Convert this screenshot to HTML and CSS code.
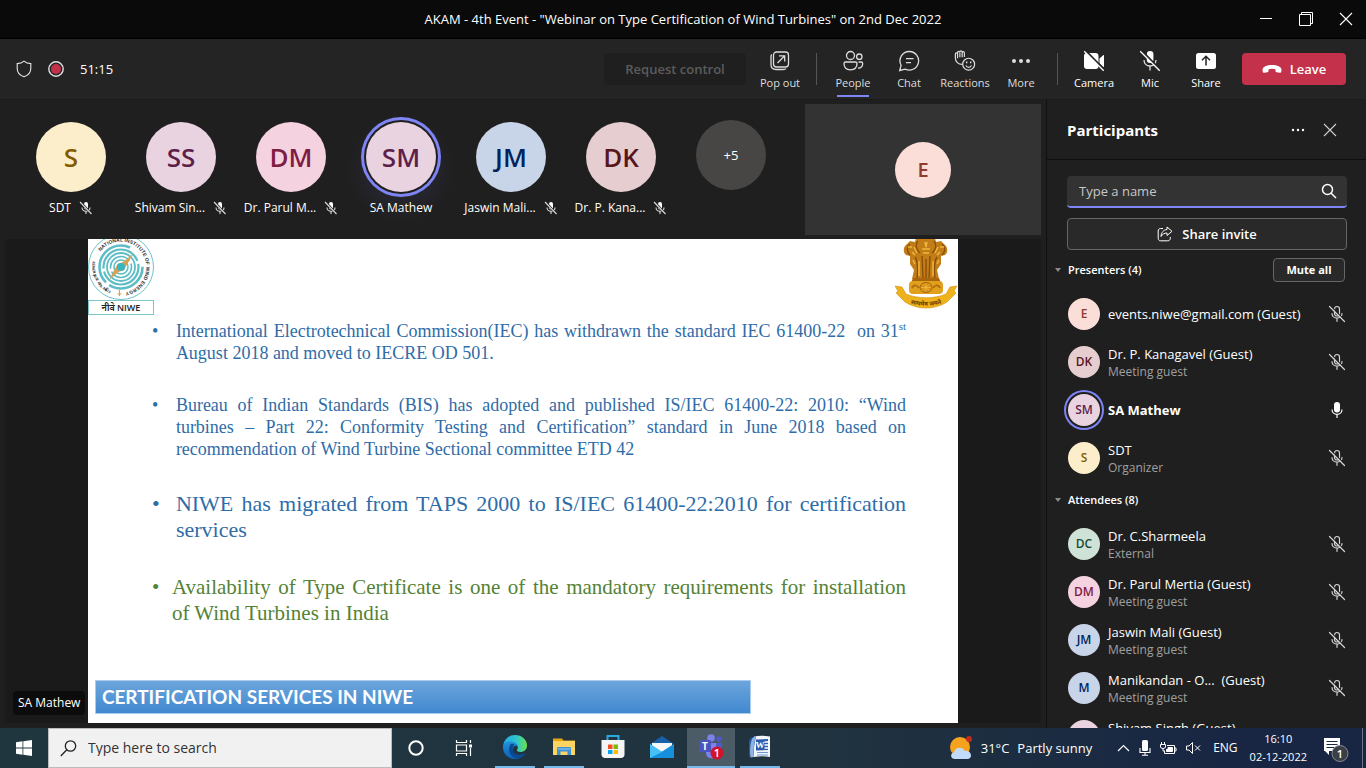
FILE: index.html
```html
<!DOCTYPE html>
<html lang="en">
<head>
<meta charset="utf-8">
<title>AKAM - 4th Event</title>
<link rel="stylesheet" href="styles.css">
</head>
<body>
<svg class="sprite" aria-hidden="true">
  <symbol id="mic-off-small" viewBox="0 0 14 14">
    <rect x="5" y="1" width="4" height="7.5" rx="2" fill="#fff"/>
    <path d="M3 6.5c0 5 8 5 8 0M7 10.5V13" fill="none" stroke="#ddd" stroke-width="1.1"/>
    <path d="M1.5 1l11 12" stroke="#1f1f1f" stroke-width="2.4"/>
    <path d="M1 1l11.5 12" stroke="#ddd" stroke-width="1.1"/>
  </symbol>
  <symbol id="mic-off" viewBox="0 0 18 18">
    <g fill="none" stroke="#d6d6d6" stroke-width="1.2" stroke-linecap="round">
      <rect x="6.5" y="1.5" width="5" height="9.5" rx="2.5"/>
      <path d="M4 8.5c0 6 10 6 10 0M9 13.2V16.3"/>
      <path d="M2.800 1.200l14 14" stroke="#1f1f1f" stroke-width="1.200"/>
      <path d="M1.5 1.5l15 15"/>
    </g>
  </symbol>
  <symbol id="mic-on" viewBox="0 0 18 18">
    <rect x="6" y="1" width="6" height="10.5" rx="3" fill="#fff"/>
    <path d="M4 8.5c0 6.5 10 6.5 10 0M9 13.5V17" fill="none" stroke="#fff" stroke-width="1.2"/>
  </symbol>
</svg>

<header class="titlebar">
  <h1 class="titlebar-text">AKAM - 4th Event - "Webinar on Type Certification of Wind Turbines" on 2nd Dec 2022</h1>
  <div class="window-controls">
    <button class="window-button" aria-label="Minimize"><svg width="14" height="14" viewBox="0 0 14 14"><path d="M1 6.5h12" stroke="#fff"/></svg></button>
    <button class="window-button" aria-label="Restore"><svg width="14" height="14" viewBox="0 0 14 14" fill="none" stroke="#fff"><path d="M.5 2.5h11v11H.5zM2.500 2V.5h11v11H12"/></svg></button>
    <button class="window-button" aria-label="Close"><svg width="14" height="14" viewBox="0 0 14 14"><path d="M1 1l12 12M13 1L1 13" stroke="#fff" stroke-width="1.1"/></svg></button>
  </div>
</header>

<nav class="toolbar">
  <div class="call-status">
    <svg width="16" height="18" viewBox="0 0 16 18" fill="none" stroke="#e6e6e6" stroke-width="1.1"><path d="M8 1.200C6.200 2.800 3.800 3.600 1.200 3.600V8.500C1.200 12.500 3.500 15.300 8 16.800C12.500 15.300 14.800 12.500 14.800 8.500V3.600C12.200 3.600 9.800 2.800 8 1.200z"/></svg>
    <svg width="16" height="16" viewBox="0 0 16 16"><circle cx="8" cy="8" r="7.200" fill="none" stroke="#e1e1e1" stroke-width="1.400"/><circle cx="8" cy="8" r="5" fill="#c4314b"/></svg>
    <span class="timer">51:15</span>
  </div>
  <div class="tools">
    <button class="request" disabled>Request control</button>
    <button class="tool"><svg width="22" height="22" viewBox="0 0 22 22" fill="none" stroke="#ddd" stroke-width="1.300"><rect x="4.500" y="2" width="15" height="15" rx="3"/><path d="M2.700 4.500C2 5 2 6 2 7v7.500c0 3 2 5 5 5H14c1.500 0 2.500-.2 3-.8"/><path d="M8.500 13l7-7M10 5.800h5.700v5.700"/></svg><span>Pop out</span></button>
    <span class="divider"></span>
    <button class="tool tool-active"><svg width="22" height="22" viewBox="0 0 22 22" fill="none" stroke="#ddd" stroke-width="1.300"><circle cx="8.500" cy="5.500" r="4"/><circle cx="17.300" cy="6.700" r="2.700"/><path d="M3.500 12h9.800c1 0 1.700.7 1.700 1.600 0 4-2.500 6.200-6.600 6.200S2 17.500 2 13.600c0-.9.600-1.600 1.500-1.600z"/><path d="M16.500 12h2.700c.8 0 1.500.7 1.500 1.500 0 2.700-1.600 4.500-4.700 4.700"/></svg><span>People</span></button>
    <button class="tool"><svg width="22" height="22" viewBox="0 0 22 22" fill="none" stroke="#ddd" stroke-width="1.300"><path d="M11.500 1.500a9.300 9.300 0 1 1-4.400 17.600L1.700 20.500l1.400-5.300A9.300 9.300 0 0 1 11.500 1.500z"/><path d="M8 8.700h7.500M8 12.700h5"/></svg><span>Chat</span></button>
    <button class="tool"><svg width="24" height="24" viewBox="0 0 24 24" fill="none" stroke="#ddd" stroke-width="1.300"><path d="M9.500 15.700C4.500 16 1.500 12.500 1.500 9V4.500c0-1.700 2.400-1.700 2.400 0V2.800c0-1.700 2.500-1.700 2.500 0V2.300c0-1.700 2.500-1.700 2.500 0v.7c0-1.700 2.400-1.700 2.400 0v4.500M3.900 4v5M6.400 3v5M8.900 3v5"/><circle cx="16" cy="15.500" r="6.500"/><path d="M13 16.800c1 2.800 5 2.800 6 0"/><path d="M13.800 12.500v2M18.200 12.500v2" stroke-width="1.600"/></svg><span>Reactions</span></button>
    <button class="tool"><svg width="22" height="22" viewBox="0 0 22 22" fill="#ddd"><circle cx="4" cy="11" r="2"/><circle cx="11" cy="11" r="2"/><circle cx="18" cy="11" r="2"/></svg><span>More</span></button>
    <span class="divider"></span>
    <button class="tool tool-bright"><svg width="22" height="22" viewBox="0 0 22 22"><rect x="1" y="3" width="14.500" height="16" rx="3" fill="#fff"/><path d="M16.500 8.500l4-3.500c.3-.2.500 0 .5.300v11.400c0 .3-.2.500-.5.300l-4-3.500z" fill="#fff"/><path d="M2.500.5l19.500 20" stroke="#242424" stroke-width="2"/><path d="M1.200 1.200l19.500 19.500" stroke="#fff" stroke-width="1.300"/></svg><span>Camera</span></button>
    <button class="tool tool-bright"><svg width="22" height="22" viewBox="0 0 22 22"><rect x="7.800" y="1" width="6.600" height="12" rx="3.300" fill="#fff"/><path d="M5 10c0 8 12 8 12 0M11 16v4.500" fill="none" stroke="#ddd" stroke-width="1.300"/><path d="M2.500.5l19.500 20" stroke="#242424" stroke-width="2"/><path d="M1.200 1.200l19.500 19.500" stroke="#fff" stroke-width="1.300"/></svg><span>Mic</span></button>
    <button class="tool tool-bright"><svg width="22" height="22" viewBox="0 0 22 22"><rect x="1" y="3" width="20" height="16" rx="2.500" fill="#fff"/><path d="M11 15.500V6.500M7 10.300l4-4 4 4" fill="none" stroke="#242424" stroke-width="1.500"/></svg><span>Share</span></button>
    <button class="leave"><svg width="20" height="10" viewBox="0 0 20 10"><path d="M10 1C15 1 19.500 2.800 19.500 6c0 2.200-.8 3-2 2.800l-2.800-.6c-1-.2-1.300-.8-1.300-1.700V5.200C11.500 4.500 8.500 4.500 6.600 5.200v1.300c0 .9-.3 1.500-1.300 1.700l-2.800.6C1.300 9 .5 8.200.5 6 .5 2.800 5 1 10 1z" fill="#fff"/></svg>Leave</button>
  </div>
</nav>

<main class="meeting">
  <section class="stage">
    <div class="gallery">
      <ul class="people">
        <li class="person"><span class="avatar avatar-large gold">S</span><span class="person-name"><span>SDT</span><svg width="14" height="14"><use href="#mic-off-small"/></svg></span></li>
        <li class="person"><span class="avatar avatar-large plum">SS</span><span class="person-name"><span>Shivam Sin...</span><svg width="14" height="14"><use href="#mic-off-small"/></svg></span></li>
        <li class="person"><span class="avatar avatar-large pink">DM</span><span class="person-name"><span>Dr. Parul M...</span><svg width="14" height="14"><use href="#mic-off-small"/></svg></span></li>
        <li class="person glow"><span class="avatar avatar-large plum speaking-large">SM</span><span class="person-name"><span>SA Mathew</span></span></li>
        <li class="person"><span class="avatar avatar-large blue">JM</span><span class="person-name"><span>Jaswin Mali...</span><svg width="14" height="14"><use href="#mic-off-small"/></svg></span></li>
        <li class="person"><span class="avatar avatar-large rose">DK</span><span class="person-name"><span>Dr. P. Kana...</span><svg width="14" height="14"><use href="#mic-off-small"/></svg></span></li>
        <li class="person person-more"><button class="avatar avatar-large more">+5</button></li>
      </ul>
      <div class="self-tile"><span class="avatar avatar-medium peach">E</span></div>
    </div>

    <div class="share-area">
      <article class="slide">
        <div class="slide-logos">
          <svg width="67" height="76" viewBox="0 0 67 76" role="img" aria-label="NIWE">
            <circle cx="33" cy="28" r="32.500" fill="#fff" stroke="#6cc3cb"/>
            <g fill="none" stroke="#5dbdc7">
              <circle cx="33" cy="28" r="21.500" stroke-width="2.600" stroke-dasharray="46 4 60 24"/>
              <circle cx="33" cy="28" r="17.500" stroke-width="2.200" stroke-dasharray="50 3"/>
              <circle cx="33" cy="28" r="14" stroke-width="1.800"/>
              <circle cx="33" cy="28" r="10.500" stroke-width="1.600" stroke-dasharray="28 3"/>
              <circle cx="33" cy="28" r="7" stroke-width="1.500"/>
            </g>
            <path d="M45 15L36 31 30.500 33 21 41l8.500-16 5.500-2z" fill="#d3a356"/>
            <circle cx="33" cy="28" r="4" fill="#37b6c0"/>
            <path d="M31.500 51v6M29.500 55h4" stroke="#d3a356" stroke-width="1.200"/>
            <path id="ring-left" d="M23 51.500A25.500 25.500 0 0 1 12 13" fill="none"/>
            <path id="ring-right" d="M12.500 12.500A25.500 25.500 0 1 1 35 53.500" fill="none"/>
            <text class="ring-text ring-text-hindi"><textPath href="#ring-left">राष्ट्रीय पवन ऊर्जा संस्थान</textPath></text>
            <text class="ring-text"><textPath href="#ring-right">NATIONAL INSTITUTE OF WIND ENERGY</textPath></text>
            <rect x=".5" y="61.500" width="65" height="14" fill="#fff" stroke="#7cc5cb"/>
            <text x="33" y="72" text-anchor="middle" class="niwe-text">नीवे NIWE</text>
          </svg>
          <svg width="64" height="72" viewBox="0 0 64 72" role="img" aria-label="National emblem">
            <path d="M18 40l2-9-4-6V17l-4-1c-3-2-3-8 0-10l4-4 5 1 1-4h19l1 4 5-1 4 4c3 2 3 8 0 10l-4 1v8l-4 6 2 9z" fill="#c27d16"/>
            <path d="M16 5c-4 3-3 9 0 11M48 5c4 3 3 9 0 11M24 2c-3 4-2 9 2 12M40 2c3 4 2 9-2 12M21 18c3 4 3 12 2 22M43 18c-3 4-3 12-2 22M28 17l1 23M36 17l-1 23M32 20v20" fill="none" stroke="#8a4d0a" stroke-width="1.300"/>
            <path d="M20 8l3 6M44 8l-3 6M31 3l1 5 1-5M28 10h8M29 14h6M25 22v15M39 22v15M14 8h4M46 8h4M18 13l3 3M46 13l-3 3M19 21l2 4M45 21l-2 4" stroke="#edb63c" stroke-width="1.500" fill="none"/>
            <path d="M19 39h26l2 5H17z" fill="#a8650d"/>
            <rect x="15" y="42" width="34" height="13" rx="4" fill="#e0a01c"/>
            <ellipse cx="32" cy="48.500" rx="6" ry="5" fill="#d58f18" stroke="#a8650d"/>
            <path d="M32 44v9M27 48.500h10M28.500 45l7 7M35.500 45l-7 7" stroke="#f6c648" stroke-width=".6"/>
            <path d="M18 49c2-4 5-3 7 0M39 49c2-3 5-4 7 0" fill="none" stroke="#b06f10" stroke-width="2"/>
            <path d="M1 47l7 1 4 7c12 5 28 5 40 0l4-7 7-1-3 5 2 2-9 9c-13 8-29 8-42 0l-9-9 2-2z" fill="#eeb21c" stroke="#d18f10" stroke-width=".6"/>
            <path id="motto" d="M8 60c12 9 36 9 48 0" fill="none"/>
            <text class="motto-text"><textPath href="#motto" startOffset="50%" text-anchor="middle">सत्यमेव जयते</textPath></text>
          </svg>
        </div>
        <ul class="points">
          <li class="point"><span class="full-line">International Electrotechnical Commission(IEC) has withdrawn the standard IEC 61400-22 &nbsp;on 31<sup>st</sup></span> August 2018 and moved to IECRE OD 501.</li>
          <li class="point"><span class="full-line">Bureau of Indian Standards (BIS) has adopted and published IS/IEC 61400-22: 2010: “Wind</span> <span class="full-line">turbines – Part 22: Conformity Testing and Certification” standard in June 2018 based on</span> recommendation of Wind Turbine Sectional committee ETD 42</li>
          <li class="point point-large"><span class="full-line">NIWE has migrated from TAPS 2000 to IS/IEC 61400-22:2010 for certification</span> services</li>
          <li class="point point-large point-green"><span class="full-line">Availability of Type Certificate is one of the mandatory requirements for installation</span> of Wind Turbines in India</li>
        </ul>
        <h2 class="slide-banner">CERTIFICATION SERVICES IN NIWE</h2>
      </article>
      <span class="presenter-tag">SA Mathew</span>
    </div>
  </section>

  <aside class="panel">
    <header class="panel-header">
      <h2 class="panel-title">Participants</h2>
      <button class="icon-button" aria-label="More options"><svg width="16" height="16" viewBox="0 0 16 16" fill="#fff"><circle cx="3" cy="8" r="1.200"/><circle cx="8" cy="8" r="1.200"/><circle cx="13" cy="8" r="1.200"/></svg></button>
      <button class="icon-button" aria-label="Close panel"><svg width="16" height="16" viewBox="0 0 16 16"><path d="M2 2l12 12M14 2L2 14" stroke="#d0d0d0" stroke-width="1.100"/></svg></button>
    </header>
    <div class="panel-body">
      <label class="search">
        <input class="search-input" type="text" placeholder="Type a name" aria-label="Type a name">
        <svg width="16" height="16" viewBox="0 0 16 16" fill="none" stroke="#fff" stroke-width="1.500"><circle cx="6.500" cy="6.500" r="5"/><path d="M10.200 10.200L15 15"/></svg>
      </label>
      <button class="invite"><svg width="16" height="16" viewBox="0 0 16 16" fill="none" stroke="#fff" stroke-width="1"><path d="M6 2.500H3.500C2 2.500 1.200 3.500 1.200 5v7.300c0 1.500.8 2.500 2.300 2.500h7.300c1.500 0 2.500-1 2.500-2.500V11"/><path d="M10 1l5 4.300-5 4.200V7C7.500 7 5.500 8 4 10.500 4.200 6.500 6.500 3.800 10 3.500z"/></svg>Share invite</button>
      <section class="group">
        <header class="group-header"><svg class="caret" width="6" height="4" viewBox="0 0 6 4"><path d="M0 0h6L3 4z" fill="#8a8a8a"/></svg><h3 class="group-title">Presenters (4)</h3><button class="mute-all">Mute all</button></header>
        <ul class="roster">
          <li class="member"><span class="avatar avatar-small peach">E</span><span class="member-text"><span class="member-name">events.niwe@gmail.com (Guest)</span></span><svg width="18" height="18"><use href="#mic-off"/></svg></li>
          <li class="member"><span class="avatar avatar-small rose">DK</span><span class="member-text two-lines"><span class="member-name">Dr. P. Kanagavel (Guest)</span><span class="member-role">Meeting guest</span></span><svg width="18" height="18"><use href="#mic-off"/></svg></li>
          <li class="member"><span class="avatar avatar-small plum speaking-small">SM</span><span class="member-text"><strong class="member-name">SA Mathew</strong></span><svg width="18" height="18"><use href="#mic-on"/></svg></li>
          <li class="member"><span class="avatar avatar-small gold">S</span><span class="member-text two-lines"><span class="member-name">SDT</span><span class="member-role">Organizer</span></span><svg width="18" height="18"><use href="#mic-off"/></svg></li>
        </ul>
      </section>
      <section class="group">
        <header class="group-header"><svg class="caret" width="6" height="4" viewBox="0 0 6 4"><path d="M0 0h6L3 4z" fill="#8a8a8a"/></svg><h3 class="group-title">Attendees (8)</h3></header>
        <ul class="roster">
          <li class="member"><span class="avatar avatar-small green">DC</span><span class="member-text two-lines"><span class="member-name">Dr. C.Sharmeela</span><span class="member-role">External</span></span><svg width="18" height="18"><use href="#mic-off"/></svg></li>
          <li class="member"><span class="avatar avatar-small pink">DM</span><span class="member-text two-lines"><span class="member-name">Dr. Parul Mertia (Guest)</span><span class="member-role">Meeting guest</span></span><svg width="18" height="18"><use href="#mic-off"/></svg></li>
          <li class="member"><span class="avatar avatar-small blue">JM</span><span class="member-text two-lines"><span class="member-name">Jaswin Mali (Guest)</span><span class="member-role">Meeting guest</span></span><svg width="18" height="18"><use href="#mic-off"/></svg></li>
          <li class="member"><span class="avatar avatar-small blue">M</span><span class="member-text two-lines"><span class="member-name">Manikandan - O... &nbsp;(Guest)</span><span class="member-role">Meeting guest</span></span><svg width="18" height="18"><use href="#mic-off"/></svg></li>
          <li class="member"><span class="avatar avatar-small plum"></span><span class="member-text two-lines"><span class="member-name">Shivam Singh (Guest)</span><span class="member-role">&nbsp;</span></span></li>
        </ul>
      </section>
    </div>
  </aside>
</main>

<footer class="taskbar">
  <button class="task-button" aria-label="Start"><svg width="16" height="16" viewBox="0 0 16 16" fill="#fff"><path d="M0 2.200L6.500 1.300V7.600H0zM7.300 1.200L16 0v7.600H7.300zM0 8.400h6.500v6.300L0 13.800zM7.300 8.400H16V16l-8.700-1.200z"/></svg></button>
  <label class="task-search">
    <svg width="17" height="17" viewBox="0 0 17 17" fill="none" stroke="#222" stroke-width="1.300"><circle cx="10.500" cy="6" r="5.200"/><path d="M6.800 9.800L.8 16"/></svg>
    <input class="task-search-input" type="text" placeholder="Type here to search" aria-label="Type here to search">
  </label>
  <button class="task-button" aria-label="Cortana"><svg width="16" height="16" viewBox="0 0 16 16"><circle cx="8" cy="8" r="6.700" fill="none" stroke="#fff" stroke-width="2"/></svg></button>
  <button class="task-button" aria-label="Task view"><svg width="18" height="16" viewBox="0 0 18 16" fill="none" stroke="#fff" stroke-width="1.200"><path d="M1.500 0v2.500h10V0M1.500 16v-2.500h10V16M1.500 5h10v6h-10zM15.500 0v3M15.500 8v8"/><path d="M14 4.500h3v3h-3z" fill="#fff" stroke="none"/></svg></button>
  <div class="apps">
    <button class="app app-open" aria-label="Edge"><svg width="24" height="24" viewBox="0 0 24 24">
      <defs><linearGradient id="edge-top" x1="0" x2="1"><stop offset="0" stop-color="#25a9e8"/><stop offset=".55" stop-color="#2cc4cf"/><stop offset="1" stop-color="#6ae34b"/></linearGradient><linearGradient id="edge-low" x1="0" y1="0" x2="0" y2="1"><stop offset="0" stop-color="#1f93dc"/><stop offset="1" stop-color="#0c5fb5"/></linearGradient></defs>
      <path d="M0 11C1 4 6 0 12 0c7 0 12 5 12 10.500 0 4-3 6.500-6.500 6.500-2.500 0-4-1-3.500-2.200 1.500-2 1-5.300-2.500-6.800C7 6 2 7 0 11z" fill="url(#edge-top)"/>
      <path d="M0 12c0-4 4-6 8-5.500C12 7 15 9.500 15 12c-2-2.500-5-1-5.500 2-.5 5 5 8 12.500 4.500C20 22 16 24 12 24 5 24 0 19 0 12z" fill="url(#edge-low)"/>
      <path d="M8 9c-4 5-2 12 6 14.800 4-.5 6.500-2.300 8.500-5.600-7 3.300-13.500.5-13-4.500.2-2 .8-3 2-4C10.500 8.700 9 8.500 8 9z" fill="#0b4a91"/></svg></button>
    <button class="app app-open" aria-label="File Explorer"><svg width="22" height="20" viewBox="0 0 22 20"><path d="M0 1.500h9l1.500 2H22V17H0z" fill="#e8a60c"/><path d="M0 4h22v14H0z" fill="#fcd462"/><path d="M4 18v-6.500C4 10.500 4.500 10 5.500 10h11c1 0 1.500.5 1.500 1.500V18h-3.500v-3.500h-7V18z" fill="#3f91d3"/><path d="M5 11h12v2H5z" fill="#65b2e8"/></svg></button>
    <button class="app" aria-label="Microsoft Store"><svg width="24" height="24" viewBox="0 0 24 24"><path d="M6.500 5.500V1h11v4.500" fill="none" stroke="#28a9df" stroke-width="2"/><path d="M.5 5h23v14.500c0 2-1.500 3.500-3.500 3.500H4c-2 0-3.500-1.500-3.500-3.500z" fill="#f5f5f5"/><path d="M7 9.500h4.500V14H7z" fill="#f25022"/><path d="M12.500 9.500H17V14h-4.500z" fill="#7fba00"/><path d="M7 15h4.500v4H7z" fill="#00a4ef"/><path d="M12.500 15H17v4h-4.500z" fill="#ffb900"/></svg></button>
    <button class="app" aria-label="Mail"><svg width="24" height="24" viewBox="0 0 24 24"><path d="M0 9L12 1l12 8z" fill="#1a60a9"/><path d="M2 8h20v9H2z" fill="#f4f6f8"/><path d="M0 9l12 8 12-8v14H0z" fill="#2aa7e8"/><path d="M0 23l13-7 11-7v14z" fill="#1590dc"/><path d="M0 9l12 8-12 6z" fill="#45c0f4"/></svg></button>
    <button class="app app-current" aria-label="Teams"><svg width="26" height="26" viewBox="0 0 26 26"><circle cx="13" cy="4" r="3.800" fill="#7b83eb"/><circle cx="21" cy="5" r="2.700" fill="#5059c9"/><path d="M8 9h11v10c0 7-11 7-11 0z" fill="#7b83eb"/><path d="M18 9h6v8c0 4-6 4-6 0z" fill="#5059c9"/><rect x="1" y="6" width="12" height="12" rx="1" fill="#4b53bc"/><text x="7" y="16" class="teams-letter">T</text><circle cx="19" cy="19" r="6.500" fill="#d0142c"/><text x="19" y="23" class="badge-digit">1</text></svg></button>
    <button class="app app-open" aria-label="Word"><svg width="24" height="24" viewBox="0 0 24 24"><path d="M6 1.500c5-1 10-1 16 0V22c-5-1-11-1-16 0z" fill="#f2f6fc"/><path d="M1 6C2 3 4 1.500 8 1.500L4.500 20 1 22z" fill="#2856a3"/><path d="M4 4c1-1.500 2-2.500 4-2.500C5.500 8 5.500 15 6 22l-3.500.5C1.500 16 2 9 4 4z" fill="#8eb2e4"/><path d="M8 4.500l12-.5v11l-12 .5z" fill="#2b5cad"/><text x="12" y="13" class="word-letter">W</text><path d="M16.500 7H21M16.500 10H21M16.500 13H21" stroke="#fff" stroke-width="1.300"/><path d="M9 17.500h11M9 20h11" stroke="#6f95d0"/></svg></button>
  </div>
  <div class="tray">
    <button class="weather"><svg width="24" height="24" viewBox="0 0 24 24"><circle cx="11" cy="11" r="10" fill="#f5a21f"/><circle cx="20" cy="3" r="3" fill="#c42b1c"/><path d="M6 23c-5 0-5-6-1-6.500C6 10.500 14 10.500 15.500 15 22 13 25 23 18 23z" fill="#c2dbfa"/></svg><span>31°C</span><span>Partly sunny</span></button>
    <button class="tray-icon" aria-label="Show hidden icons"><svg width="13" height="8" viewBox="0 0 13 8"><path d="M1 7l5.500-5.500L12 7" fill="none" stroke="#fff" stroke-width="1.200"/></svg></button>
    <button class="tray-icon" aria-label="Microphone"><svg width="12" height="16" viewBox="0 0 12 16"><rect x="3" y="0" width="6" height="11" rx="1.500" fill="#fff"/><path d="M1 8v4.500h10V8M6 12.500V15M3 15.300h6" fill="none" stroke="#fff" stroke-width="1.100"/></svg></button>
    <button class="tray-icon" aria-label="Battery"><svg width="17" height="13" viewBox="0 0 17 13" fill="none" stroke="#fff"><path d="M7 3.500h7.500v8h-10V9M14.500 6H16v3h-1.500"/><path d="M8 5.500h4.500v4H6.500v-2H8z" fill="#fff"/><path d="M.5 2.500h5V5c0 2-5 2-5 0zM1.500 0v2.500M4.500 0v2.500M3 6.500V9h2"/></svg></button>
    <button class="tray-icon" aria-label="Muted"><svg width="15" height="12" viewBox="0 0 15 12" fill="none" stroke="#fff"><path d="M.5 4H3l3.500-3.500v11L3 8H.5zM9 3.500l5 5M14 3.500l-5 5"/></svg></button>
    <button class="language">ENG</button>
    <button class="clock"><span>16:10</span><span>02-12-2022</span></button>
    <button class="notices" aria-label="Notifications"><svg width="28" height="26" viewBox="0 0 28 26"><path d="M1 1h16v13H6v4l-4-4H1z" fill="#fff"/><path d="M3.500 4.500h11M3.500 7.500h11M3.500 10.500h8" stroke="#1b2944"/><circle cx="17" cy="16.500" r="8" fill="#3a3f46" stroke="#858a91"/><text x="17" y="21" class="badge-digit">1</text></svg></button>
  </div>
</footer>
</body>
</html>
```
FILE: styles.css
```css
* {
  box-sizing: border-box;
}

body {
  display: flex;
  flex-direction: column;
  height: 100vh;
  margin: 0;
  overflow: hidden;
  background: #1f1f1f;
  color: #fff;
  font: 12px/16px "Open Sans", "Noto Sans", sans-serif;
}

h1,
h2,
h3,
ul {
  margin: 0;
  padding: 0;
}

ul {
  list-style: none;
}

button {
  padding: 0;
  border: 0;
  background: none;
  color: inherit;
  font: inherit;
}

svg {
  flex: none;
}

.sprite {
  display: none;
}

/* Title bar */

.titlebar {
  display: grid;
  grid-template-columns: 1fr auto 1fr;
  flex: none;
  align-items: center;
  height: 39px;
  border-bottom: 1px solid #000;
  background: #0a0a0a;
}

.titlebar-text {
  grid-column: 2;
  font-size: 13px;
  font-weight: 400;
  line-height: 20px;
}

.window-controls {
  display: flex;
  justify-content: flex-end;
}

.window-button {
  display: grid;
  place-items: center;
  width: 40px;
  height: 38px;
}

/* Meeting toolbar */

.toolbar {
  display: flex;
  flex: none;
  justify-content: space-between;
  height: 61px;
  padding: 0 20px 0 16px;
  border-bottom: 1px solid #1b1b1b;
  background: #242424;
}

.call-status,
.tools {
  display: flex;
  align-items: center;
}

.call-status {
  gap: 16px;
}

.timer {
  font-size: 13px;
}

.request {
  width: 142px;
  height: 32px;
  margin-right: 6px;
  border-radius: 4px;
  background: #1f1f1f;
  color: #5c5c5c;
  font-size: 13px;
  font-weight: 600;
}

.tool {
  display: flex;
  flex-direction: column;
  align-items: center;
  justify-content: center;
  width: 56px;
  height: 60px;
  padding-top: 4px;
  border-bottom: 2px solid transparent;
  color: #ddd;
  font-size: 11px;
  line-height: 16px;
}

.tool svg {
  height: 22px;
  margin-bottom: 3px;
}

.tool-bright {
  color: #fff;
}

.tool-active {
  background: linear-gradient(#7f85f5, #7f85f5) center bottom / 32px 2px no-repeat;
}

.divider {
  width: 1px;
  height: 32px;
  margin: 0 8px;
  background: #555;
}

.leave {
  display: flex;
  align-items: center;
  justify-content: center;
  gap: 8px;
  width: 104px;
  height: 32px;
  margin-left: 8px;
  border-radius: 4px;
  background: #c4314b;
  font-size: 13px;
  font-weight: 600;
}

/* Meeting area */

.meeting {
  display: flex;
  flex: 1;
  min-height: 0;
}

.stage {
  display: flex;
  flex: 1;
  flex-direction: column;
  min-width: 0;
  padding: 0 5px 5px;
}

.gallery {
  display: flex;
  justify-content: space-between;
  height: 139px;
  padding: 4px 0;
}

.people {
  display: flex;
  padding-left: 11px;
}

.person {
  display: flex;
  flex-direction: column;
  align-items: center;
  gap: 8px;
  width: 110px;
  padding-top: 18px;
}

.person-more {
  padding-top: 16px;
}

.glow {
  background: radial-gradient(circle closest-side, #2c2c40, #1f1f1f);
}

.person-name {
  display: flex;
  align-items: center;
  gap: 8px;
  white-space: nowrap;
}

.avatar {
  display: grid;
  flex: none;
  place-items: center;
  border-radius: 50%;
  font-weight: 600;
}

.avatar-large {
  width: 70px;
  height: 70px;
  font-size: 26px;
}

.avatar-medium {
  width: 56px;
  height: 56px;
  font-size: 20px;
}

.avatar-small {
  width: 32px;
  height: 32px;
  font-size: 12px;
}

.gold { background: #fdeecb; color: #835c00; }
.plum { background: #ead3e1; color: #5c1f4a; }
.pink { background: #f5d2df; color: #7e1d43; }
.blue { background: #c8d4e8; color: #00245b; }
.rose { background: #e6cdd0; color: #59151c; }
.peach { background: #fbded8; color: #8e3d2d; }
.green { background: #cfe2d8; color: #174c34; }
.more { background: #484644; color: #fff; font-size: 13px; font-weight: 400; }

.speaking-large {
  box-shadow: 0 0 0 2px #1f1f1f, 0 0 0 5px #7f85f5;
}

.speaking-small {
  box-shadow: 0 0 0 2px #1f1f1f, 0 0 0 4px #7f85f5;
}

.self-tile {
  display: grid;
  place-items: center;
  width: 236px;
  background: #333;
}

.share-area {
  position: relative;
  display: flex;
  flex: 1;
  justify-content: center;
  min-height: 0;
  background: #1a1a1a;
}

.presenter-tag {
  position: absolute;
  bottom: 8px;
  left: 8px;
  padding: 4px 5px;
  border-radius: 4px;
  background: #0c0c0c;
}

/* Shared slide */

.slide {
  display: flex;
  flex-direction: column;
  width: 84%;
  background: #fff;
}

.slide-logos {
  display: flex;
  justify-content: space-between;
}

.ring-text {
  fill: #333;
  font: 700 5px "Liberation Sans", sans-serif;
}

.ring-text-hindi {
  font-size: 4px;
}

.niwe-text {
  fill: #222;
  font: 600 9px "Open Sans", "Noto Sans", sans-serif;
}

.motto-text {
  fill: #6b3d00;
  font: 700 6px "Noto Sans", sans-serif;
}

.points {
  display: flex;
  flex: 1;
  flex-direction: column;
  gap: 30px;
  padding: 5px 52px 0 64px;
  color: #2e6ca8;
  font: 18px/22px "Liberation Serif", serif;
}

.point {
  position: relative;
  padding-left: 24px;
}

.point::before {
  content: "•";
  position: absolute;
  left: 0;
}

.full-line {
  display: block;
  text-align-last: justify;
  white-space: nowrap;
}

.point sup {
  font-size: 11px;
  line-height: 0;
}

.point-large {
  margin-top: 1px;
  font-size: 22px;
  line-height: 26px;
}

.point-green {
  padding-left: 20px;
  color: #548235;
  font-size: 21px;
}

.slide-banner {
  width: 656px;
  margin: 0 7px 9px;
  padding: 0 6px;
  border: 1px solid #a9cbee;
  background: linear-gradient(#6ca5dc, #4189cf);
  font: 700 19px/32px Lato, sans-serif;
}

/* Participants panel */

.panel {
  display: flex;
  flex: none;
  flex-direction: column;
  width: 320px;
  border-left: 1px solid #0f0f0f;
}

.panel-header {
  display: flex;
  flex: none;
  align-items: center;
  gap: 16px;
  height: 60px;
  padding: 0 28px 0 20px;
  border-bottom: 1px solid #0f0f0f;
}

.panel-title {
  flex: 1;
  font-size: 15px;
  font-weight: 700;
}

.icon-button {
  height: 16px;
}

.panel-body {
  display: flex;
  flex: 1;
  flex-direction: column;
  min-height: 0;
  padding: 16px 19px 0 20px;
  overflow: hidden;
}

.search {
  display: flex;
  flex: none;
  align-items: center;
  height: 32px;
  padding: 0 10px 0 12px;
  border-bottom: 2px solid #7f85f5;
  border-radius: 4px;
  background: #333;
}

.search-input {
  flex: 1;
  min-width: 0;
  padding: 0;
  border: 0;
  background: none;
  color: #fff;
  font: inherit;
  font-size: 13px;
}

.search-input::placeholder {
  color: #c8c8c8;
}

.invite {
  display: flex;
  flex: none;
  align-items: center;
  justify-content: center;
  gap: 9px;
  height: 32px;
  margin: 10px 0 2px;
  border: 1px solid #666;
  border-radius: 4px;
  background: #292929;
  font-size: 13px;
  font-weight: 600;
}

.group {
  flex: none;
}

.group-header {
  display: flex;
  align-items: center;
  gap: 7px;
  height: 36px;
  margin: 0 2px 2px -12px;
}

.group-title {
  flex: 1;
  font-size: 11px;
  font-weight: 600;
}

.mute-all {
  width: 72px;
  height: 24px;
  border: 1px solid #666;
  border-radius: 4px;
  background: #292929;
  font-size: 11px;
  font-weight: 700;
}

.member {
  display: flex;
  align-items: center;
  gap: 8px;
  height: 48px;
  padding: 0 1px;
}

.member-text {
  display: flex;
  flex: 1;
  flex-direction: column;
  min-width: 0;
  white-space: nowrap;
}

.two-lines {
  padding-top: 2px;
}

.member-name {
  font-size: 13px;
  line-height: 18px;
}

.member-role {
  color: #a0a0a0;
  line-height: 18px;
}

/* Taskbar */

.taskbar {
  display: flex;
  flex: none;
  height: 40px;
  background: linear-gradient(90deg, #20363f, #20333f 60%, #182643 90%);
  font-size: 14px;
}

.task-button {
  display: grid;
  place-items: center;
  width: 48px;
}

.task-search {
  display: flex;
  align-items: center;
  gap: 11px;
  width: 344px;
  padding: 0 11px;
  border: 1px solid #bbb;
  background: #f1f1f1;
}

.task-search-input {
  flex: 1;
  min-width: 0;
  padding: 0;
  border: 0;
  background: none;
  font: inherit;
}

.task-search-input::placeholder {
  color: #333;
}

.apps {
  display: flex;
  gap: 9px;
  padding-left: 7px;
}

.app {
  display: grid;
  place-items: center;
  width: 40px;
  border-bottom: 2px solid transparent;
}

.app-open {
  border-color: #76b9ed;
}

.app-current {
  width: 48px;
  margin: 0 -4px;
  border-color: #76b9ed;
  background: #4b5c66;
}

.teams-letter {
  fill: #fff;
  font: 700 10px "Open Sans", sans-serif;
  text-anchor: middle;
}

.badge-digit {
  fill: #fff;
  font: 600 11px "Open Sans", sans-serif;
  text-anchor: middle;
}

.word-letter {
  fill: #fff;
  font: 700 9px "Liberation Serif", serif;
  text-anchor: middle;
}

.tray {
  display: flex;
  align-items: center;
  gap: 9px;
  margin-left: auto;
  padding-right: 3px;
}

.weather {
  display: flex;
  align-items: center;
  gap: 8px;
  margin-right: 16px;
  font-size: 13px;
}

.tray-icon {
  display: grid;
  place-items: center;
}

.language {
  margin: 0 3px;
  font-size: 12px;
}

.clock {
  display: flex;
  flex-direction: column;
  align-items: center;
  font-size: 11px;
  line-height: 18px;
}

.notices {
  display: grid;
  place-items: center;
  height: 40px;
  padding: 4px 11px 0 7px;
  border-right: 1px solid #6b7789;
}
```
